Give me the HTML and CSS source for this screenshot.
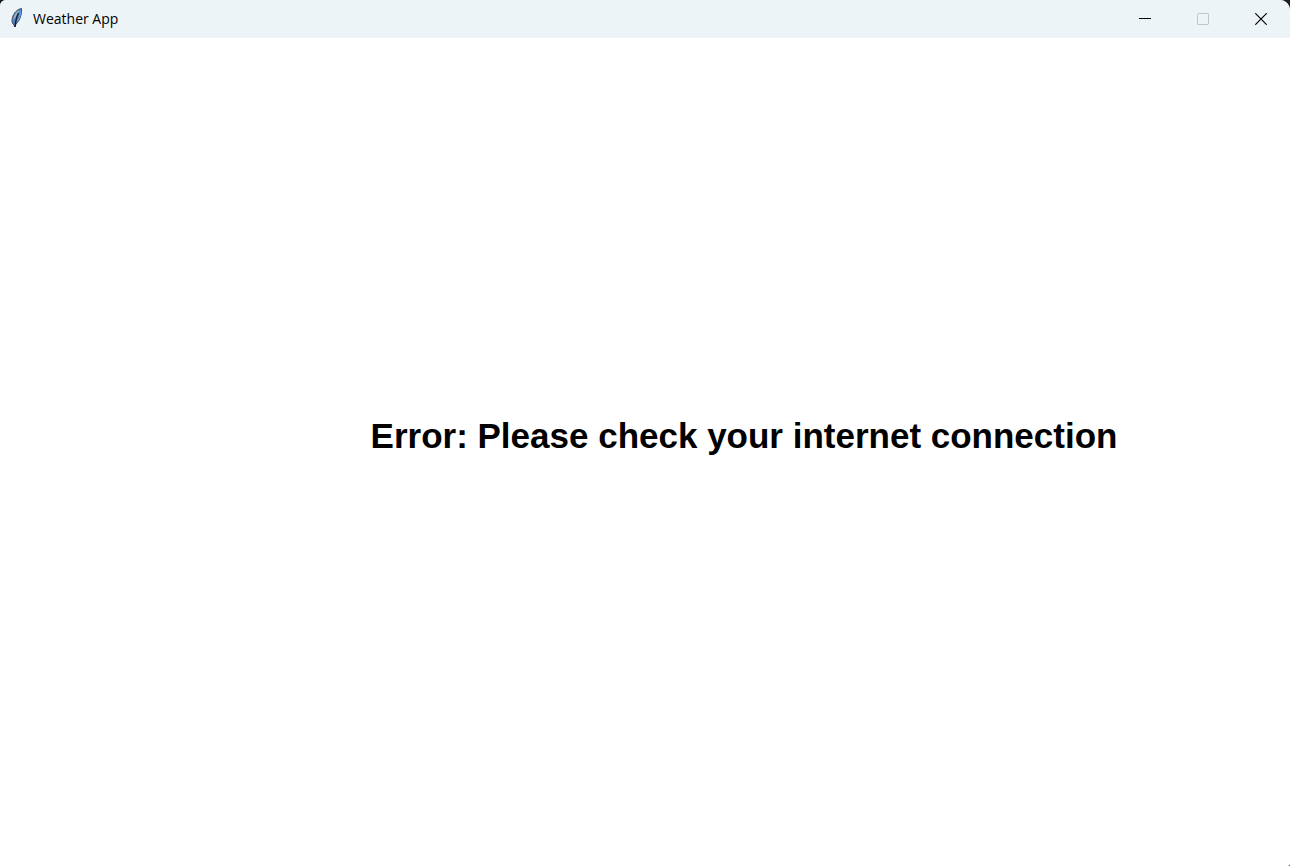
FILE: index.html
```html
<!DOCTYPE html>
<html lang="en">
<head>
<meta charset="utf-8">
<title>Weather App</title>
<link rel="stylesheet" href="styles.css">
</head>
<body>
<div class="window">
  <header class="titlebar">
    <svg class="app-icon" width="14" height="22" viewBox="0 0 14 22" aria-hidden="true">
      <path d="M11.500 1.500C8 2 4.500 5 3 9C1.500 13 1.700 16 3.500 17.500L5 20L6 17C9 14.500 12 9 11.500 1.500Z" fill="#4a86cc" stroke="#4a4d53" stroke-width="1"/>
      <path d="M10 3C6.500 4 4 8 3 13L5 11Z" fill="#a3adb9"/>
      <path d="M8.500 6C6.500 10 5.500 14 5 20" fill="none" stroke="#14181f" stroke-width="1.300"/>
      <path d="M10.500 4C10.500 8 9 12 7.500 14" fill="none" stroke="#5b9ae2" stroke-width="1.300"/>
    </svg>
    <h1 class="title">Weather App</h1>
    <div class="controls">
      <button class="control" type="button" aria-label="Minimize">
        <svg width="12" height="12" viewBox="0 0 12 12"><path d="M0 5.500H12" stroke="#000"/></svg>
      </button>
      <button class="control" type="button" aria-label="Maximize" disabled>
        <svg width="12" height="12" viewBox="0 0 12 12"><rect x=".5" y=".5" width="11" height="11" rx="1" fill="none" stroke="#bdc2c5"/></svg>
      </button>
      <button class="control" type="button" aria-label="Close">
        <svg width="12" height="12" viewBox="0 0 12 12"><path d="M.3 .3L11.700 11.700M11.700 .3L.3 11.700" stroke="#000" stroke-width="1.200"/></svg>
      </button>
    </div>
  </header>
  <main class="content">
    <p class="message" role="alert">Error: Please check your internet connection</p>
  </main>
</div>
</body>
</html>
```
FILE: styles.css
```css
body {
  margin: 0;
  background: #1d1d1d;
  font-family: "Open Sans", "Noto Sans", sans-serif;
}

.window {
  display: flex;
  flex-direction: column;
  min-height: 100vh;
  overflow: hidden;
  background: #fff;
  border-radius: 6px 10px 2px 0;
}

.titlebar {
  display: flex;
  align-items: center;
  height: 38px;
  padding-left: 10px;
  background: #ecf4f8;
}

.app-icon {
  margin-bottom: 2px;
}

.title {
  flex: 1;
  margin: 0 0 0 9px;
  color: #000;
  font-size: 14px;
  font-weight: 400;
  line-height: 20px;
}

.controls {
  display: flex;
  align-self: stretch;
}

.control {
  display: flex;
  align-items: center;
  justify-content: center;
  width: 58px;
  padding: 0;
  border: 0;
  background: transparent;
}

.content {
  display: flex;
  flex: 1;
  align-items: center;
  justify-content: center;
  padding: 0 0 32px 198px;
}

.message {
  margin: 0;
  color: #000;
  font-family: "Liberation Sans", Arial, sans-serif;
  font-size: 35px;
  font-weight: 700;
  line-height: 42px;
}
```
